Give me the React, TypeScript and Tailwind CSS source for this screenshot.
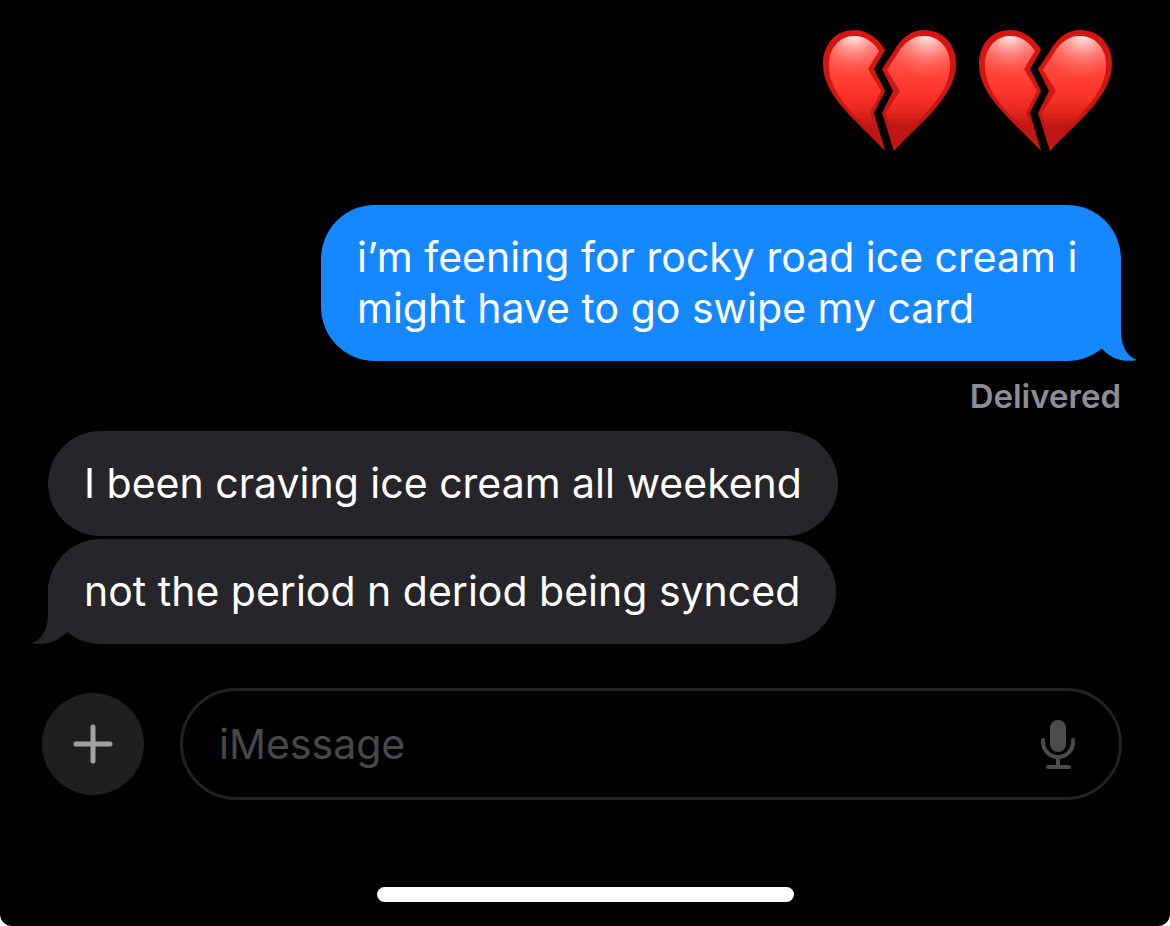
import React from 'react';

const BrokenHeart: React.FC<{ id: string }> = ({ id }) => (
    <svg viewBox="13 14 134 123" className="w-[134px] h-[123px]" role="img" aria-label="broken heart">
        <defs>
            <linearGradient id={`${id}-rim`} x1="0" y1="14" x2="0" y2="137" gradientUnits="userSpaceOnUse">
                <stop offset="0" stopColor="#d9140f" />
                <stop offset="0.5" stopColor="#cf1713" />
                <stop offset="0.8" stopColor="#bd1511" />
                <stop offset="1" stopColor="#c81a15" />
            </linearGradient>
            <linearGradient id={`${id}-face`} x1="0" y1="20" x2="0" y2="136" gradientUnits="userSpaceOnUse">
                <stop offset="0" stopColor="#ff6a60" />
                <stop offset="0.45" stopColor="#ff382e" />
                <stop offset="0.6" stopColor="#f02c24" />
                <stop offset="0.8" stopColor="#c01712" />
                <stop offset="1" stopColor="#c01712" />
            </linearGradient>
            <radialGradient id={`${id}-shineL`} cx="44" cy="18" r="44" gradientUnits="userSpaceOnUse">
                <stop offset="0" stopColor="#fff" />
                <stop offset="0.3" stopColor="#ffc8c4" stopOpacity="0.75" />
                <stop offset="1" stopColor="#ff5a50" stopOpacity="0" />
            </radialGradient>
            <radialGradient id={`${id}-shineR`} cx="117" cy="18" r="46" gradientUnits="userSpaceOnUse">
                <stop offset="0" stopColor="#fff" />
                <stop offset="0.3" stopColor="#ffc8c4" stopOpacity="0.75" />
                <stop offset="1" stopColor="#ff5a50" stopOpacity="0" />
            </radialGradient>
            <filter id={`${id}-soft`} x="-10%" y="-10%" width="120%" height="120%">
                <feGaussianBlur stdDeviation="0.7" />
            </filter>
        </defs>
        <path d="M75 35C68 23 57 15 44 15C26 15 13 29 13 49C13 66 22 80 34 94C46 108 61 121 75 136L64 98L75 76L64 54Z" fill={`url(#${id}-rim)`} />
        <path d="M72 54L84 36C91 23 101 15 114 15C133 15 146 29 146 49C146 66 136 81 124 95C112 109 97 121 84 136L72 98L83 76Z" fill={`url(#${id}-rim)`} />
        <g filter={`url(#${id}-soft)`}>
            <path d="M69 36C63 27 55 21 44 21C30 21 19 33 19 50C19 66 26 78 36 91C47 104 60 116 71 130L60 98L71 76L58 54Z" fill={`url(#${id}-face)`} />
            <path d="M77 55L88 38C95 27 103 21 114 21C129 21 140 33 140 50C140 66 132 79 121 92C110 105 96 117 84 133L76 98L90 76Z" fill={`url(#${id}-face)`} />
            <path d="M69 36C63 27 55 21 44 21C30 21 19 33 19 50L22 66L62 62L58 54Z" fill={`url(#${id}-shineL)`} />
            <path d="M77 55L88 38C95 27 103 21 114 21C129 21 140 33 140 50L138 66L84 66Z" fill={`url(#${id}-shineR)`} />
        </g>
    </svg>
);

const Tail: React.FC<{ className: string }> = ({ className }) => (
    <svg viewBox="0 0 56 60" className={`absolute bottom-0 h-[60px] w-[56px] ${className}`} aria-hidden="true">
        <path d="M40 0V30C40 46 47 56 56 59C41 62 30 57 21 48L4 30V0Z" fill="currentColor" />
    </svg>
);

const Bubble: React.FC<{ sent?: boolean; tail?: boolean; children: React.ReactNode }> = ({ sent, tail, children }) => (
    <div
        className={`relative rounded-[54px] px-9 py-[27px] text-[41px] leading-[51px] ${
            sent ? 'self-end max-w-[800px] bg-[#1588ff] text-white' : 'self-start bg-[#26252a] text-white'
        }`}
    >
        {tail && <Tail className={sent ? '-right-4 text-[#1588ff]' : '-left-4 -scale-x-100 text-[#26252a]'} />}
        <p className="relative">{children}</p>
    </div>
);

const MicIcon = () => (
    <svg viewBox="0 0 36 52" className="h-[52px] w-9" fill="none" stroke="#4b4b4d" strokeWidth="4" strokeLinecap="round">
        <rect x="10" y="2" width="16" height="32" rx="8" fill="#4b4b4d" stroke="none" />
        <path d="M3 22V24A15 15 0 0 0 33 24V22M18 40V48" />
        <path d="M8 49H29" />
    </svg>
);

export default function App() {
    return (
        <div className="bg-white">
            <main className="flex min-h-screen flex-col rounded-b-xl bg-black pt-[29px] font-['Inter','Liberation_Sans',sans-serif]">
                <section className="flex flex-col pr-[49px] pl-12">
                    <div className="mr-2 flex gap-[22px] self-end">
                        <BrokenHeart id="h1" />
                        <BrokenHeart id="h2" />
                    </div>
                    <div className="mt-[53px] flex flex-col">
                        <Bubble sent tail>
                            i’m feening for rocky road ice cream i might have to go swipe my card
                        </Bubble>
                        <p className="mt-4 mb-4 self-end text-[33px] leading-[38px] font-semibold text-[#8d8d93]">Delivered</p>
                    </div>
                    <div className="flex flex-col gap-[3px]">
                        <Bubble>I been craving ice cream all weekend</Bubble>
                        <Bubble tail>not the period n deriod being synced</Bubble>
                    </div>
                </section>

                <form className="mt-11 flex items-center gap-9 pr-12 pl-[42px]" onSubmit={(e) => e.preventDefault()}>
                    <button type="button" aria-label="Add" className="flex size-[102px] shrink-0 items-center justify-center rounded-full bg-[#1f1f21]">
                        <svg viewBox="0 0 40 40" className="size-10" stroke="#a2a2a5" strokeWidth="5" strokeLinecap="round">
                            <path d="M20 3V37M3 20H37" />
                        </svg>
                    </button>
                    <div className="flex h-28 min-w-0 flex-1 items-center rounded-full border-3 border-[#222224] pr-[43px] pl-9">
                        <input
                            type="text"
                            aria-label="iMessage"
                            placeholder="iMessage"
                            className="min-w-0 flex-1 bg-transparent text-[41px] leading-[51px] text-white outline-none placeholder:text-[#48484a]"
                        />
                        <button type="button" aria-label="Dictate">
                            <MicIcon />
                        </button>
                    </div>
                </form>

                <div className="mx-auto mt-auto mb-6 h-[15px] w-[417px] rounded-full bg-white" />
            </main>
        </div>
    );
}
